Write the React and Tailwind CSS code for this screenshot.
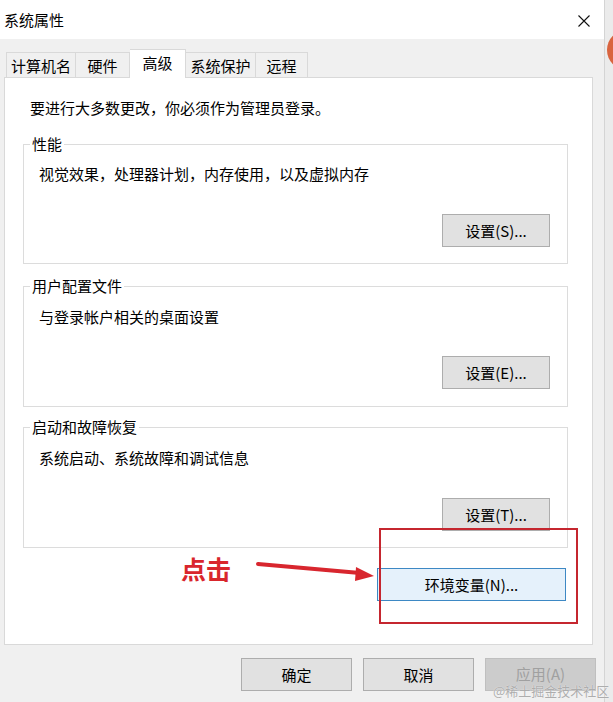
import React from "react";

const font = { fontFamily: '"Microsoft YaHei", "Noto Sans CJK SC", sans-serif' };

function WinButton({ children, className = "" }) {
  return (
    <div
      className={
        "flex items-center justify-center h-[33px] border text-[15px] leading-none " +
        className
      }
    >
      {children}
    </div>
  );
}

function Group({ title, desc, button, cls }) {
  return (
    <fieldset className={"border border-[#dcdcdc] w-[545px] " + cls.fs}>
      <legend className="ml-[6px] px-[2px] leading-[20px] text-[15px] text-black">{title}</legend>
      <div className={"pl-[15px] leading-[20px] text-[15px] text-black " + cls.desc}>{desc}</div>
      <div className={"flex justify-end pr-[17px] " + cls.btn}>
        <WinButton className="w-[108px] bg-[#e1e1e1] border-[#adadad] text-black">{button}</WinButton>
      </div>
    </fieldset>
  );
}

export default function App() {
  return (
    <div className="relative w-[613px] h-[702px] overflow-hidden bg-[#f0f0f0] flex" style={font}>
      {/* window */}
      <div className="w-[604px] flex flex-col">
        {/* title bar */}
        <div className="h-[39px] bg-white flex items-center justify-between pl-[4px] pr-[14px]">
          <span className="text-[15px] text-black leading-none">系统属性</span>
          <svg width="12" height="12" viewBox="0 0 12 12" className="mt-[2px]">
            <path d="M0.5 0.5 L11.5 11.5 M11.5 0.5 L0.5 11.5" stroke="#111" strokeWidth="1.1" fill="none" />
          </svg>
        </div>

        {/* tabs */}
        <div className="flex items-end pl-[6px] mt-[10px] h-[28px] text-[15px] text-black">
          <div className="w-[70px] h-[25px] border-t border-l border-r border-[#d9d9d9] bg-[#f0f0f0] flex items-center justify-center leading-none">计算机名</div>
          <div className="w-[54px] h-[25px] border-t border-r border-[#d9d9d9] bg-[#f0f0f0] flex items-center justify-center leading-none">硬件</div>
          <div className="relative z-10 -mb-px w-[56px] h-[29px] border-t border-r border-[#d9d9d9] bg-white flex items-start justify-center pt-[5px] leading-none">高级</div>
          <div className="w-[70px] h-[25px] border-t border-r border-[#d9d9d9] bg-[#f0f0f0] flex items-center justify-center leading-none">系统保护</div>
          <div className="w-[52px] h-[25px] border-t border-r border-[#d9d9d9] bg-[#f0f0f0] flex items-center justify-center leading-none">远程</div>
        </div>

        {/* panel */}
        <div className="ml-[4px] w-[589px] h-[568px] border border-[#d9d9d9] bg-white pt-[20px] pl-[18px] flex flex-col">
          <div className="ml-[7px] leading-[20px] text-[15px] text-black">要进行大多数更改，你必须作为管理员登录。</div>

          <Group
            title="性能"
            desc="视觉效果，处理器计划，内存使用，以及虚拟内存"
            button="设置(S)..."
            cls={{ fs: "mt-[16px]", desc: "mt-[10px]", btn: "mt-[30px] pb-[16px]" }}
          />
          <Group
            title="用户配置文件"
            desc="与登录帐户相关的桌面设置"
            button="设置(E)..."
            cls={{ fs: "mt-[12px]", desc: "mt-[11px]", btn: "mt-[29px] pb-[17px]" }}
          />
          <Group
            title="启动和故障恢复"
            desc="系统启动、系统故障和调试信息"
            button="设置(T)..."
            cls={{ fs: "mt-[10px]", desc: "mt-[11px]", btn: "mt-[30px] pb-[16px]" }}
          />

          <div className="w-[545px] flex justify-end mt-[20px]">
            <WinButton className="w-[189px] mr-[2px] bg-[#e5f1fb] border-[#3d88c4] text-black">环境变量(N)...</WinButton>
          </div>
        </div>

        {/* bottom buttons */}
        <div className="flex justify-end gap-[11px] pr-[8px] mt-[13px]">
          <WinButton className="w-[111px] bg-[#e1e1e1] border-[#adadad] text-black">确定</WinButton>
          <WinButton className="w-[111px] bg-[#e1e1e1] border-[#adadad] text-black">取消</WinButton>
          <WinButton className="w-[111px] bg-[#cccccc] border-[#bfbfbf] text-[#a0a0a0] items-start pt-[7px]">应用(A)</WinButton>
        </div>
      </div>

      {/* right strip outside the window */}
      <div className="relative flex-1 border-l border-[#d4d4d4] bg-[#ebebeb] overflow-hidden">
        <div className="absolute left-[2px] top-[30px] w-[40px] h-[40px] rounded-full bg-[#d9643f]" />
      </div>

      {/* annotations */}
      <div className="absolute left-[379px] top-[528px] w-[199px] h-[96px] border-2 border-[#c5262f]" />
      <div className="absolute left-[181px] top-[556px] text-[25px] font-bold text-[#d9262c] leading-none">点击</div>
      <svg className="absolute left-0 top-0" width="613" height="702" viewBox="0 0 613 702" style={{ pointerEvents: "none" }}>
        <line x1="258" y1="564" x2="360" y2="573" stroke="#d8262e" strokeWidth="4" strokeLinecap="round" />
        <polygon points="374,576 356,567 355,581" fill="#d8262e" />
      </svg>

      {/* watermark */}
      <div className="absolute left-[493px] top-[684px] text-[13px] leading-none text-[#adadad] whitespace-nowrap" style={{ textShadow: "0 0 1px #fff" }}>
        @稀土掘金技术社区
      </div>
    </div>
  );
}
